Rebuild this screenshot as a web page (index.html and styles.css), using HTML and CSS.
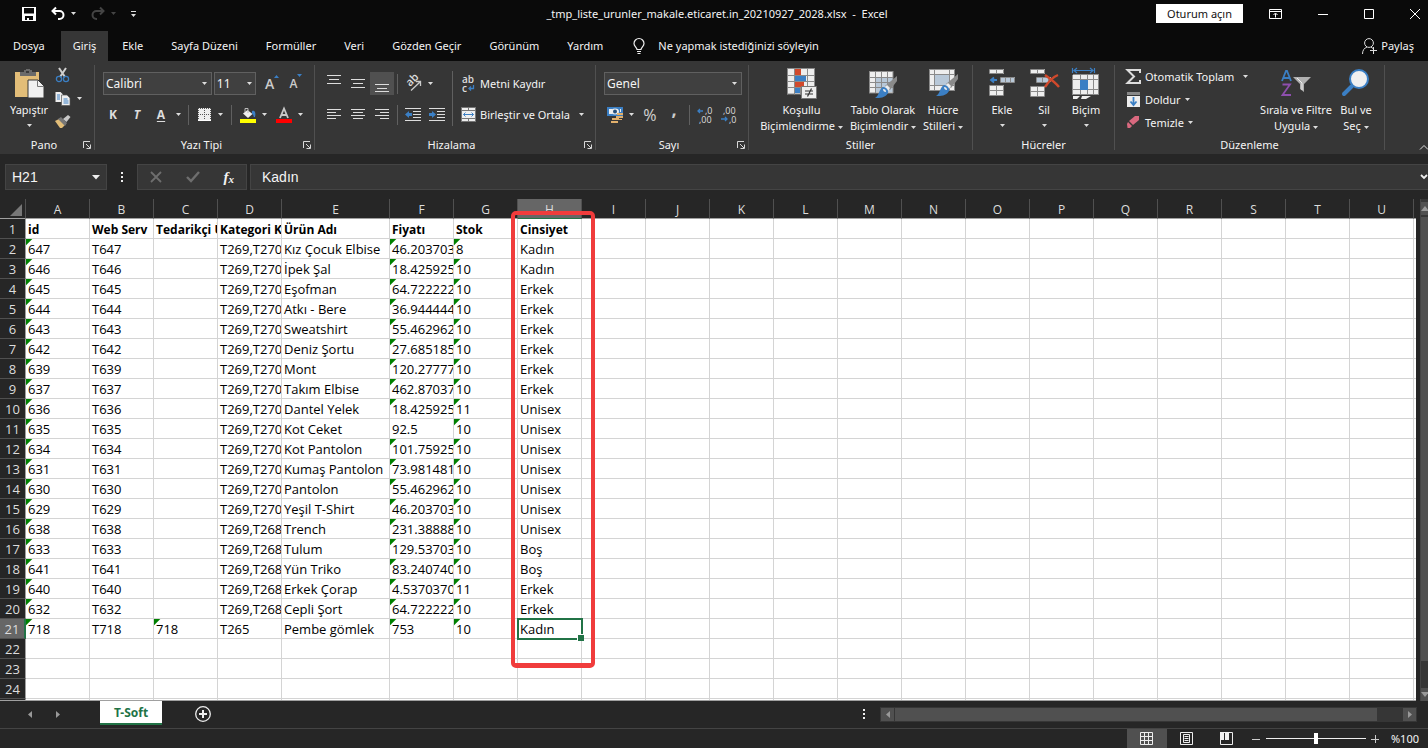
FILE: index.html
```html
<!DOCTYPE html>
<html lang="tr">
<head>
<meta charset="utf-8">
<title>_tmp_liste_urunler_makale.eticaret.in_20210927_2028.xlsx - Excel</title>
<link rel="stylesheet" href="styles.css">
</head>
<body>
<svg class="defs" aria-hidden="true">
  <symbol id="caret" viewBox="0 0 5 3"><path d="M0 0h5L2.500 3z" fill="currentColor"/></symbol>
  <symbol id="launch" viewBox="0 0 8 8"><path d="M.5 7V.5H7M3 3l4 4M7.500 3.500v4h-4" fill="none" stroke="#d8d8d8"/></symbol>
</svg>

<header class="titlebar">
  <div class="quick">
    <button class="ib" aria-label="Kaydet"><svg width="14" height="14" viewBox="0 0 14 14"><path fill="#fff" fill-rule="evenodd" d="M0 0h14v14H0zM2 1v5.500h10V1zM3 9v4h2v-2h2v2h4V9z"/></svg></button>
    <button class="ib undo" aria-label="Geri al"><svg width="14" height="13" viewBox="0 0 14 13"><path d="M1 4h7.500a4 4 0 0 1 0 8H7M5 .5L1.500 4 5 7.500" fill="none" stroke="#fff" stroke-width="2"/></svg><svg class="caret"><use href="#caret"/></svg></button>
    <button class="ib redo" aria-label="Yinele"><svg width="14" height="13" viewBox="0 0 14 13"><path d="M13 4H5.500a4 4 0 0 0 0 8H6M9 .5L12.500 4 9 7.500" fill="none" stroke="#444" stroke-width="2"/></svg><svg class="caret"><use href="#caret"/></svg></button>
    <button class="ib" aria-label="Özelleştir"><svg width="5" height="6" viewBox="0 0 5 6"><path d="M0 0h5v1H0zM0 3h5L2.500 6z" fill="#ddd"/></svg></button>
  </div>
  <h1 class="doc">_tmp_liste_urunler_makale.eticaret.in_20210927_2028.xlsx&nbsp; -&nbsp; Excel</h1>
  <div class="win">
    <button class="signin">Oturum açın</button>
    <button class="ib" aria-label="Şerit görüntüleme"><svg width="13" height="10" viewBox="0 0 13 10"><path d="M.5.5h12v9H.5zM.5 2.500h12M6.500 8.500v-4M4.500 6l2-2 2 2" fill="none" stroke="#fff"/></svg></button>
    <button class="ib" aria-label="Simge durumu"><svg width="10" height="10" viewBox="0 0 10 10"><path d="M0 5.500h10" stroke="#fff"/></svg></button>
    <button class="ib" aria-label="Ekranı kapla"><svg width="10" height="10" viewBox="0 0 10 10"><path d="M.5.5h9v9h-9z" fill="none" stroke="#fff"/></svg></button>
    <button class="ib" aria-label="Kapat"><svg width="10" height="10" viewBox="0 0 10 10"><path d="M0 0l10 10M10 0L0 10" stroke="#fff"/></svg></button>
  </div>
</header>

<nav class="tabs">
  <button class="file">Dosya</button><button class="on">Giriş</button><button>Ekle</button><button>Sayfa Düzeni</button><button>Formüller</button><button>Veri</button><button>Gözden Geçir</button><button>Görünüm</button><button>Yardım</button>
  <button class="tell"><svg width="12" height="16" viewBox="0 0 12 16"><path d="M4 11.500c0-2-3-3-3-6a5 5 0 0 1 10 0c0 3-3 4-3 6zM4 13.500h4M4.500 15.500h3" fill="none" stroke="#eee" stroke-width="1.200"/></svg>Ne yapmak istediğinizi söyleyin</button>
  <button class="share"><svg width="15" height="16" viewBox="0 0 15 16"><circle cx="7" cy="5" r="4.400" fill="none" stroke="#ddd"/><path d="M.5 16c0-4 2-6 4.500-7M9 9l2 1.500M8 12.500h7M11.500 9v7" fill="none" stroke="#ddd"/></svg>Paylaş</button>
</nav>

<section class="ribbon">
  <div class="group pano">
    <div class="body">
      <button class="big"><svg width="32" height="32" viewBox="0 0 32 32"><path d="M2 4h24v25H2z" fill="#e2bd78"/><path d="M7 4h4V2h2V1h4v1h2v2h4v4H7z" fill="#6a6a6a"/><path d="M13 3h3v2h-3z" fill="#3a3a3a"/><path d="M15 12h10l6 6v12H15z" fill="#f0f0f0" stroke="#363636"/><path d="M24.500 12v6.500H31" fill="none" stroke="#777"/></svg><span>Yapıştır</span><svg class="caret"><use href="#caret"/></svg></button>
      <div class="stack">
        <button class="ib" aria-label="Kes"><svg width="16" height="16" viewBox="0 0 16 16"><path d="M4 1l6 9M11 1L5 10" stroke="#d0d0d0" stroke-width="2"/><circle cx="4" cy="12" r="2.600" fill="none" stroke="#3b7fc4" stroke-width="1.300"/><circle cx="11" cy="12" r="2.600" fill="none" stroke="#3b7fc4" stroke-width="1.300"/></svg></button>
        <button class="ib" aria-label="Kopyala"><svg width="16" height="15" viewBox="0 0 16 15"><path d="M.5 1h5l2.500 2.500V11H.500z" fill="#eee"/><path d="M6.500 4h5.500l3 3v7.500H6.500z" fill="#eee" stroke="#555" stroke-width=".7"/><path d="M2 4h3M2 6h3M2 8h3M8.500 8h4M8.500 10h5M8.500 12h5" stroke="#3b7fc4"/></svg><svg class="caret"><use href="#caret"/></svg></button>
        <button class="ib" aria-label="Biçim boyacısı"><svg width="16" height="15" viewBox="0 0 16 15"><path d="M0 7l4-2 6 6-3 3H5z" fill="#e2bd78"/><path d="M3 5l3-2 6 6-2 3z" fill="#777"/><path d="M8 5l5-4 2.500 2-4 5z" fill="#c8c8c8"/></svg></button>
      </div>
    </div>
    <div class="label"><span>Pano</span><button class="ib" aria-label="Pano ayarları"><svg width="8" height="8"><use href="#launch"/></svg></button></div>
  </div>

  <div class="group font">
    <div class="body rows">
      <div class="row">
        <label class="combo wide"><select aria-label="Yazı tipi"><option>Calibri</option></select><svg class="caret"><use href="#caret"/></svg></label>
        <label class="combo size"><select aria-label="Boyut"><option>11</option></select><svg class="caret"><use href="#caret"/></svg></label>
        <button class="ib grow" aria-label="Büyüt"><b>A</b><svg width="5" height="3" viewBox="0 0 5 3"><path d="M0 3h5L2.500 0z" fill="#3b7fc4"/></svg></button>
        <button class="ib shrink" aria-label="Küçült"><b>A</b><svg width="5" height="3" viewBox="0 0 5 3"><path d="M0 0h5L2.500 3z" fill="#3b7fc4"/></svg></button>
      </div>
      <div class="row">
        <button class="w24 fmt">K</button><button class="w24 fmt it">T</button><button class="w24 fmt un">A</button><button class="w9 ib" aria-label="Altı çizili"><svg class="caret"><use href="#caret"/></svg></button>
        <i class="sep"></i>
        <button class="ib tool" aria-label="Kenarlık"><svg width="15" height="15" viewBox="0 0 15 15"><path d="M1 1h13v12H1z" fill="#eee"/><path d="M1 1.500h13M1 7.500h13M7.500 1v12M1.500 1v12M13.500 1v12" stroke="#555" stroke-dasharray="1 1"/><path d="M1 13.500h13" stroke="#fff"/></svg><svg class="caret"><use href="#caret"/></svg></button>
        <i class="sep"></i>
        <button class="ib tool" aria-label="Dolgu rengi"><svg width="16" height="16" viewBox="0 0 16 16"><path d="M3 6.500L7.500 3l5 4L8 11z" fill="#eee"/><path d="M5 5V1.500h3V6" fill="none" stroke="#bbb"/><path d="M12 4c3-1 4 2 3 6-2 1-1-3-3-3z" fill="#3b7fc4"/><path d="M0 12h16v4H0z" fill="#ff0"/></svg><svg class="caret"><use href="#caret"/></svg></button>
        <button class="ib tool" aria-label="Yazı tipi rengi"><svg width="16" height="16" viewBox="0 0 16 16"><path d="M4 11L8 1.500 12 11M5.500 8h5" fill="none" stroke="#c8c8c8" stroke-width="1.800"/><path d="M0 12h16v4H0z" fill="#f00"/></svg><svg class="caret"><use href="#caret"/></svg></button>
      </div>
    </div>
    <div class="label"><span>Yazı Tipi</span><button class="ib" aria-label="Yazı tipi ayarları"><svg width="8" height="8"><use href="#launch"/></svg></button></div>
  </div>

  <div class="group align">
    <div class="body">
      <div class="rows">
        <div class="row">
          <button class="w24 ib" aria-label="Üste hizala"><svg width="14" height="18" viewBox="0 0 14 18"><path d="M0 .5h14M2 4.500h10M0 8.500h14" stroke="#ddd"/></svg></button><button class="w24 ib" aria-label="Ortala"><svg width="14" height="18" viewBox="0 0 14 18"><path d="M0 4.500h14M2 8.500h10M0 12.500h14" stroke="#ddd"/></svg></button><button class="w24 ib active" aria-label="Alta hizala"><svg width="14" height="18" viewBox="0 0 14 18"><path d="M0 9.500h14M2 13.500h10M0 16.500h14" stroke="#ddd"/></svg></button>
          <i class="sep"></i>
          <button class="ib tool" aria-label="Yönlendirme"><svg width="17" height="17" viewBox="0 0 17 17"><g transform="translate(5 12) rotate(-45)"><text x="0" y="0" font-size="11" font-weight="600" fill="#ddd">ab</text></g><path d="M6 15.500L15 7M11 6.500h4.500V11" fill="none" stroke="#ccc" stroke-width="1.300"/></svg><svg class="caret"><use href="#caret"/></svg></button>
        </div>
        <div class="row">
          <button class="w24 ib" aria-label="Sola hizala"><svg width="14" height="12" viewBox="0 0 14 12"><path d="M0 .5h14M0 3.500h9M0 6.500h14M0 9.500h9" stroke="#ddd"/></svg></button><button class="w24 ib" aria-label="Ortala yatay"><svg width="14" height="12" viewBox="0 0 14 12"><path d="M0 .5h14M2 3.500h10M0 6.500h14M2 9.500h10" stroke="#ddd"/></svg></button><button class="w24 ib" aria-label="Sağa hizala"><svg width="14" height="12" viewBox="0 0 14 12"><path d="M0 .5h14M5 3.500h9M0 6.500h14M5 9.500h9" stroke="#ddd"/></svg></button>
          <i class="sep"></i>
          <button class="w24 ib" aria-label="Girintiyi azalt"><svg width="16" height="14" viewBox="0 0 16 14"><path d="M0 .5h16M8 3.500h8M8 6.500h8M8 9.500h8M0 12.500h16" stroke="#ddd"/><path d="M0 6.500L4 3v2h3v3H4v2z" fill="#3b7fc4"/></svg></button><button class="w24 ib" aria-label="Girintiyi artır"><svg width="16" height="14" viewBox="0 0 16 14"><path d="M0 .5h16M8 3.500h8M8 6.500h8M8 9.500h8M0 12.500h16" stroke="#ddd"/><path d="M7 6.500L3 3v2H0v3h3v2z" fill="#3b7fc4"/></svg></button>
        </div>
      </div>
      <i class="sep tall"></i>
      <div class="rows">
        <button class="line"><svg width="15" height="16" viewBox="0 0 15 16"><text x="1" y="7" font-size="10" font-weight="600" fill="#ddd">ab</text><text x="1" y="16" font-size="10" font-weight="600" fill="#ddd">c</text><path d="M12.500 9v3.500H8M10 10.500l-2 2 2 2" fill="none" stroke="#3b7fc4" stroke-width="1.300"/></svg>Metni Kaydır</button>
        <button class="line"><svg width="15" height="15" viewBox="0 0 15 15"><path d="M0 0h15v15H0z" fill="#777"/><path d="M1 1h6v2H1zM8 1h6v2H8zM1 4h13v7H1zM1 12h6v2H1zM8 12h6v2H8z" fill="#eee"/><path d="M2.500 7.500h10M4.500 5.500l-2 2 2 2M10.500 5.500l2 2-2 2" fill="none" stroke="#3b7fc4"/></svg>Birleştir ve Ortala<svg class="caret far"><use href="#caret"/></svg></button>
      </div>
    </div>
    <div class="label"><span>Hizalama</span><button class="ib" aria-label="Hizalama ayarları"><svg width="8" height="8"><use href="#launch"/></svg></button></div>
  </div>

  <div class="group number">
    <div class="body rows">
      <label class="combo fmtbox"><select aria-label="Sayı biçimi"><option>Genel</option></select><svg class="caret"><use href="#caret"/></svg></label>
      <div class="row">
        <button class="ib tool" aria-label="Para birimi"><svg width="16" height="17" viewBox="0 0 16 17"><path d="M0 1h16v9H0z" fill="#3b7fc4"/><path d="M2 3h3v5H2zM13 3h1v3h-1z" fill="#eee"/><ellipse cx="8" cy="5.500" rx="4" ry="3" fill="#eee"/><circle cx="8" cy="5.500" r="2" fill="#264f7a"/><path d="M10 7h6v2h-6zM9 10h7v2H9zM5 12h7v2H5zM9 13h6v1H9zM4 15h7v2H4z" fill="#e2b06c"/></svg><svg class="caret"><use href="#caret"/></svg></button>
        <button class="w24 ib pct">%</button><button class="w24 ib comma">,</button>
        <i class="sep"></i>
        <button class="w24 ib" aria-label="Ondalık artır"><svg width="16" height="16" viewBox="0 0 16 16"><text x="8" y="7" font-size="9" fill="#ddd">,0</text><text x="2" y="16" font-size="9" fill="#ddd">,00</text><path d="M6 4H1M3 2L1 4l2 2" fill="none" stroke="#3b7fc4" stroke-width="1.300"/></svg></button><button class="w24 ib" aria-label="Ondalık azalt"><svg width="16" height="16" viewBox="0 0 16 16"><text x="2" y="7" font-size="9" fill="#ddd">,00</text><text x="8" y="16" font-size="9" fill="#ddd">,0</text><path d="M0 12h6M4 10l2 2-2 2" fill="none" stroke="#3b7fc4" stroke-width="1.300"/></svg></button>
      </div>
    </div>
    <div class="label"><span>Sayı</span><button class="ib" aria-label="Sayı ayarları"><svg width="8" height="8"><use href="#launch"/></svg></button></div>
  </div>

  <div class="group styles">
    <div class="body">
      <button class="big w88"><svg width="32" height="32" viewBox="0 0 32 32"><path d="M1 1h28v25H1z" fill="#eee"/><path d="M1.500.5v26M8.500.5v26M14.500.5v26M21.500.5v26M28.500.5v26M1 .5h28M1 7.500h28M1 13.500h28M1 19.500h28M1 26h28" stroke="#8a8a8a"/><path d="M9 1h6v6H9zM9 14h9v5H9z" fill="#d0492c"/><path d="M9 8h11v5H9zM9 20h5v5H9z" fill="#3b7fc4"/><path d="M15.500 18.500h15v12h-15z" fill="#eee" stroke="#777"/><path d="M19 23h8M19 26h8M25.500 20.500l-4 8" stroke="#333" stroke-width="1.200"/></svg><span>Koşullu</span><span>Biçimlendirme <svg class="caret"><use href="#caret"/></svg></span></button>
      <button class="big w74"><svg width="32" height="32" viewBox="0 0 32 32"><path d="M2 3h24v22H2z" fill="#eee"/><path d="M8 9h18v15H8z" fill="#b8c8d8"/><path d="M2.500 3v22M8.500 3v22M14.500 3v22M20.500 3v22M26 3v22M2 3.500h24M2 9.500h24M2 14.500h24M2 19.500h24M2 25h24" stroke="#8a8a8a"/><path d="M30 8v5l-7 9-5-4z" fill="#8a8a8a"/><path d="M20 17l3 3-2 3-4-3z" fill="#eee"/><path d="M16 19c3 0 6 3 5 6-3 5-8 5-13 5 4-2 4-9 8-11z" fill="#3b7fc4"/><path d="M16 21c2 0 3 1 3 3-2 0-3-1-3-3z" fill="#eee"/></svg><span>Tablo Olarak</span><span>Biçimlendir <svg class="caret"><use href="#caret"/></svg></span></button>
      <button class="big w46"><svg width="32" height="32" viewBox="0 0 32 32"><path d="M2 1h26v22H2z" fill="#eee"/><path d="M7 6h16v12H7z" fill="#b8c8d8"/><path d="M2.500 1v22M7.500 1v22M22.500 1v22M27.500 1v22M2 1.500h26M2 6.500h26M2 17.500h26M2 22.500h26" stroke="#8a8a8a"/><path d="M31 6v5l-7 9-5-4z" fill="#8a8a8a"/><path d="M21 15l3 3-2 3-4-3z" fill="#eee"/><path d="M17 17c3 0 6 3 5 6-3 5-8 5-13 5 4-2 4-9 8-11z" fill="#3b7fc4"/><path d="M17 19c2 0 3 1 3 3-2 0-3-1-3-3z" fill="#eee"/></svg><span>Hücre</span><span>Stilleri <svg class="caret"><use href="#caret"/></svg></span></button>
    </div>
    <div class="label"><span>Stiller</span></div>
  </div>

  <div class="group cells">
    <div class="body">
      <button class="big w42"><svg width="32" height="32" viewBox="0 0 32 32"><path d="M4 1h14v5H4zM4 17h14v10H4z" fill="#eee"/><path d="M15 9h14v5H15z" fill="#b8c8d8"/><path d="M3.500 1.500h14v4h-14zM10.500 1v5M14.500 9.500h14v5h-14zM19.500 9v6M24.500 9v6M3.500 17.500h14v10h-14zM3.500 22.500h14M10.500 17v11" fill="none" stroke="#8a8a8a"/><path d="M11 12H6M8 9.500L5 12l3 2.500" fill="none" stroke="#3b7fc4" stroke-width="1.800"/></svg><span>Ekle</span><svg class="caret"><use href="#caret"/></svg></button>
      <button class="big w42"><svg width="32" height="32" viewBox="0 0 32 32"><path d="M3 1h14v5H3zM3 18h14v10H3z" fill="#eee"/><path d="M9 9h14v5H9z" fill="#b8c8d8"/><path d="M2.500 1.500h14v4h-14zM9.500 1v5M8.500 9.500h12v5h-12zM14.500 9v6M2.500 18.500h14v10h-14zM2.500 23.500h14M9.500 18v11" fill="none" stroke="#8a8a8a"/><path d="M17 7c4 3 9 6 14 12M30 7c-5 2-9 6-13 12" fill="none" stroke="#d0492c" stroke-width="2.400"/></svg><span>Sil</span><svg class="caret"><use href="#caret"/></svg></button>
      <button class="big w42"><svg width="32" height="32" viewBox="0 0 32 32"><path d="M2.500 0v5M24.500 0v5M4 2.500h19M7 0L4 2.500 7 5M20 0l3 2.500L20 5" fill="none" stroke="#3b7fc4" stroke-width="1.200"/><path d="M3 7h26v20H3z" fill="#eee"/><path d="M3 6.500h26M3 11.500h26M3 21.500h26M3 26.500h26M2.500 7v20M10.500 7v20M17.500 7v20M23.500 7v20M28.500 7v20" stroke="#8a8a8a"/><path d="M10 12h8v10h-8z" fill="#3b7fc4"/><path d="M3 28h7l-3 3H3zM12 28h9l-5 3h-5z" fill="#eee"/></svg><span>Biçim</span><svg class="caret"><use href="#caret"/></svg></button>
    </div>
    <div class="label"><span>Hücreler</span></div>
  </div>

  <div class="group edit">
    <div class="body">
      <div class="stack">
        <button class="line"><svg width="15" height="15" viewBox="0 0 15 15"><path d="M14 4V1H1.500L8 7.500 1.500 14H14v-3" fill="none" stroke="#ddd" stroke-width="2"/></svg>Otomatik Toplam<svg class="caret far"><use href="#caret"/></svg></button>
        <button class="line"><svg width="15" height="15" viewBox="0 0 15 15"><path d="M1 0h13v3H1z" fill="#888"/><path d="M1 4h13v11H1z" fill="#eee"/><path d="M7.500 5v8M4.500 9.500l3 3.500 3-3.500" fill="none" stroke="#3b7fc4" stroke-width="1.800"/></svg>Doldur <svg class="caret"><use href="#caret"/></svg></button>
        <button class="line"><svg width="15" height="15" viewBox="0 0 15 15"><path d="M9 1h4v4l-6 5-4-4z" fill="#d9697f"/><path d="M2 7l4 4-2 2H1.500L1 9z" fill="#d9697f"/></svg>Temizle <svg class="caret"><use href="#caret"/></svg></button>
      </div>
      <button class="big w74"><svg width="32" height="32" viewBox="0 0 32 32"><path d="M2 13L6 3h1l4 10M3.500 10h6" fill="none" stroke="#3b7fc4" stroke-width="1.800"/><path d="M2.500 16.500H10L2.500 27H11" fill="none" stroke="#8e4fae" stroke-width="1.800"/><path d="M13 9h18l-7 7v8l-4-3v-5z" fill="#b0b0b0"/><path d="M17 10l5 5v7" fill="none" stroke="#eee"/></svg><span>Sırala ve Filtre</span><span>Uygula <svg class="caret"><use href="#caret"/></svg></span></button>
      <button class="big w46"><svg width="32" height="32" viewBox="0 0 32 32"><path d="M12 18l-8 8" stroke="#3b7fc4" stroke-width="4" stroke-linecap="round"/><circle cx="19" cy="11" r="9" fill="#f0f0f0" stroke="#3b7fc4" stroke-width="2"/></svg><span>Bul ve</span><span>Seç <svg class="caret"><use href="#caret"/></svg></span></button>
    </div>
    <div class="label"><span>Düzenleme</span></div>
  </div>
  <button class="ib collapse" aria-label="Şeridi daralt"><svg width="8" height="5" viewBox="0 0 8 5"><path d="M0 4.500l4-4 4 4" fill="none" stroke="#ddd"/></svg></button>
</section>

<section class="formula">
  <div class="namebox"><input aria-label="Ad kutusu" value="H21"><svg width="8" height="5" viewBox="0 0 8 5"><path d="M0 0h8L4 4.500z" fill="#eee"/></svg></div>
  <svg width="2" height="11" viewBox="0 0 2 11"><path d="M0 0h2v2H0zM0 4h2v2H0zM0 8h2v2H0z" fill="#eee"/></svg>
  <div class="fx">
    <button class="ib" aria-label="İptal"><svg width="12" height="12" viewBox="0 0 12 12"><path d="M1 1l10 10M11 1L1 11" stroke="#6e6e6e" stroke-width="1.800"/></svg></button>
    <button class="ib" aria-label="Gir"><svg width="14" height="12" viewBox="0 0 14 12"><path d="M1 6l4 4 8-9" fill="none" stroke="#6e6e6e" stroke-width="2.400"/></svg></button>
    <button class="ib fn" aria-label="İşlev ekle"><i>f</i><small>x</small></button>
  </div>
  <div class="entry"><input aria-label="Formül çubuğu" value="Kadın"><svg width="8" height="6" viewBox="0 0 8 6"><path d="M1 1l3 3 3-3" fill="none" stroke="#eee" stroke-width="1.800"/></svg></div>
</section>

<main class="sheet">
  <div class="gridwrap">
    <table class="grid"><colgroup id="cols"></colgroup><thead id="head"></thead><tbody id="rows"></tbody></table>
    <div class="mark"></div>
  </div>
  <div class="vscroll">
    <button class="ib" aria-label="Yukarı"><svg width="8" height="5" viewBox="0 0 8 5"><path d="M0 5h8L4 0z" fill="#999"/></svg></button>
    <div class="vthumb"></div>
    <button class="ib" aria-label="Aşağı"><svg width="8" height="5" viewBox="0 0 8 5"><path d="M0 0h8L4 5z" fill="#999"/></svg></button>
  </div>
</main>

<section class="sheetbar">
  <button class="ib nav" aria-label="Önceki"><svg width="4" height="7" viewBox="0 0 4 7"><path d="M4 0v7L0 3.500z" fill="#999"/></svg></button>
  <button class="ib nav" aria-label="Sonraki"><svg width="4" height="7" viewBox="0 0 4 7"><path d="M0 0v7l4-3.500z" fill="#999"/></svg></button>
  <button class="sheettab">T-Soft</button>
  <button class="ib" aria-label="Yeni sayfa"><svg width="16" height="16" viewBox="0 0 16 16"><circle cx="8" cy="8" r="7.300" fill="none" stroke="#eee" stroke-width="1.300"/><path d="M8 4v8M4 8h8" stroke="#eee" stroke-width="2"/></svg></button>
  <svg class="dots" width="2" height="11" viewBox="0 0 2 11"><path d="M0 0h2v2H0zM0 4h2v2H0zM0 8h2v2H0z" fill="#eee"/></svg>
  <div class="hscroll">
    <button class="ib" aria-label="Sola"><svg width="4" height="7" viewBox="0 0 4 7"><path d="M4 0v7L0 3.500z" fill="#999"/></svg></button>
    <div class="track"><div class="hthumb"></div></div>
    <button class="ib" aria-label="Sağa"><svg width="4" height="7" viewBox="0 0 4 7"><path d="M0 0v7l4-3.500z" fill="#999"/></svg></button>
  </div>
</section>

<footer class="status">
  <button class="ib view on" aria-label="Normal"><svg width="13" height="13" viewBox="0 0 13 13"><path d="M.5.5h12v12H.5zM.5 4.500h12M.5 8.500h12M4.500.5v12M8.500.5v12" fill="none" stroke="#eee"/></svg></button>
  <button class="ib view" aria-label="Sayfa düzeni"><svg width="13" height="13" viewBox="0 0 13 13"><path d="M.5.5h12v12H.5zM3.500 2.500h6v8h-6zM4.500 4.500h4M4.500 6.500h4M4.500 8.500h4" fill="none" stroke="#eee"/></svg></button>
  <button class="ib view" aria-label="Sayfa sonu"><svg width="13" height="13" viewBox="0 0 13 13"><path d="M.5.5h12v12H.5z" fill="none" stroke="#eee"/><path d="M0 0h4v8H0zM5 0h4v8H5z" fill="#eee"/></svg></button>
  <button class="ib" aria-label="Uzaklaştır"><svg width="8" height="8" viewBox="0 0 8 8"><path d="M0 4.500h8" stroke="#ccc"/></svg></button>
  <input class="zoom" type="range" min="0" max="100" value="50" aria-label="Yakınlaştırma">
  <button class="ib" aria-label="Yakınlaştır"><svg width="8" height="8" viewBox="0 0 8 8"><path d="M0 4.500h8M4.500 0v8" stroke="#ccc"/></svg></button>
  <span class="pc">%100</span>
</footer>
<script src="script.js"></script>
</body>
</html>
```

FILE: styles.css
```css
* { box-sizing: border-box; }
body { margin: 0; height: 100vh; display: flex; flex-direction: column; overflow: hidden; background: #262626; color: #f4f4f4; font: 11px/16px "Noto Sans", "Open Sans", sans-serif; }
button, input, select { font: inherit; color: inherit; background: none; border: 0; padding: 0; margin: 0; }
button { white-space: nowrap; }
svg { flex: none; display: block; overflow: visible; }
svg text { font-family: "Open Sans", sans-serif; }
.defs { display: none; }
.ib { display: flex; align-items: center; justify-content: center; }
.caret { width: 5px; height: 3px; color: #ddd; }

.titlebar { flex: none; height: 31px; background: #0a0a0a; display: grid; grid-template-columns: 1fr auto 1fr; align-items: center; padding-bottom: 4px; }
.quick { display: flex; align-items: center; padding-left: 22px; gap: 15px; }
.quick .ib { gap: 6px; }
.redo .caret { color: #444; }
.doc { margin: 0; padding-left: 6px; font-size: 11px; font-weight: 400; }
.win { display: flex; align-items: center; justify-content: flex-end; gap: 36px; padding-right: 8px; }
.signin { background: #fff; color: #111; height: 19px; padding: 0 11px; margin-right: -10px; }

.tabs { flex: none; height: 30px; background: #0a0a0a; display: flex; align-items: stretch; }
.tabs button { padding: 0 14px; }
.tabs .file { padding: 0 16px 0 13px; }
.tabs .on { background: #363636; padding: 0 12px; }
.tabs .tell, .tabs .share { display: flex; align-items: center; gap: 13px; padding: 0 16px; }
.tabs .share { margin-left: auto; gap: 4px; padding-right: 14px; }

.ribbon { flex: none; background: #363636; height: 93px; padding-top: 4px; display: flex; align-items: flex-start; }
.group { border-right: 1px solid #505050; display: flex; flex-direction: column; height: 85px; padding-left: 8px; }
.body { flex: none; height: 72px; display: flex; }
.label { display: flex; align-items: center; height: 16px; }
.label span { flex: 1; text-align: center; line-height: 16px; }
.label .ib { width: 14px; }
.pano { width: 95px; }
.font { width: 220px; }
.align { width: 281px; padding-left: 7px; }
.number { width: 153px; }
.styles { width: 224px; }
.cells { width: 142px; }
.edit { width: 270px; }
.styles .label, .cells .label, .edit .label { margin-left: -8px; }
.big { display: flex; flex-direction: column; align-items: center; padding-top: 3px; }
.big > svg:first-child { margin-bottom: 2px; }
.big span { line-height: 16px; }
.big span .caret { display: inline-block; vertical-align: middle; }
.big > .caret { margin-top: 6px; }
.pano .big { width: 42px; margin-right: 5px; }
.stack { display: flex; flex-direction: column; justify-content: space-between; align-items: flex-start; padding: 2px 0 8px; }
.pano .stack .ib { gap: 6px; height: 16px; }
.w88 { width: 89px; }
.w74 { width: 74px; }
.w46 { width: 46px; }
.w42 { width: 42px; }

.rows { display: flex; flex-direction: column; gap: 8px; padding-top: 7px; }
.row { display: flex; align-items: center; height: 23px; }
.w24 { width: 24px; height: 23px; }
.w9 { width: 10px; }
.sep { width: 1px; height: 20px; background: #606060; }
.combo { display: grid; align-items: center; height: 23px; }
.combo select { grid-area: 1 / 1; appearance: none; width: 100%; height: 23px; border: 1px solid #606060; background: #404040; padding-left: 2px; font-size: 12px; }
.combo .caret { grid-area: 1 / 1; justify-self: end; margin-right: 5px; pointer-events: none; }
.wide { width: 111px; margin-right: 2px; }
.size { width: 43px; margin-right: 9px; }
.size .caret { margin-right: 4px; }
.fmtbox { width: 138px; }
.grow, .shrink { width: 25px; align-items: flex-start; justify-content: flex-start; color: #ccc; }
.grow b { font: 600 14px/18px "Open Sans", sans-serif; }
.shrink b { font: 600 12px/20px "Open Sans", sans-serif; }
.fmt { font: 700 12px/23px "Open Sans", sans-serif; color: #ddd; }
.font .row:nth-child(2) { margin-left: -2px; }
.it { font-style: italic; }
.un { text-decoration: underline; text-underline-offset: 2px; }
.font .row .w9 { margin-right: 5px; }
.tool { gap: 6px; padding: 0 5px 0 7px; }
.font .tool { padding: 0 4px 0 1px; }
.font .sep + .tool { padding-left: 8px; padding-right: 8px; }
.active { background: #505050; }
.align .sep { margin-left: 3px; }
.align .sep + .w24 { margin-left: 3px; }
.align .sep.tall { height: 55px; margin: 6px 8px 0 3px; }
.line { display: flex; align-items: center; gap: 4px; height: 23px; }
.far { margin-left: 5px; }
.number .tool { padding: 0 4px 0 3px; }
.pct { font-size: 16px; color: #ccc; }
.comma { font: 700 18px/10px "Open Sans", sans-serif; color: #ccc; padding-bottom: 12px; }
.number .sep { margin: 0 3px; }
.edit .stack { padding: 0 0 3px 3px; width: 136px; }
.edit .line { gap: 4px; }
.collapse { align-self: flex-end; margin: 0 0 4px auto; }

.formula { flex: none; display: flex; align-items: center; padding: 10px 0 9px 5px; gap: 14px; font: 14px/18px "Liberation Sans", Arial, sans-serif; }
.namebox, .fx, .entry { height: 26px; border: 1px solid #444; background: #363636; display: flex; align-items: center; }
.namebox { width: 102px; padding: 0 6px; }
.namebox input { flex: 1; min-width: 0; }
.fx { width: 110px; justify-content: space-around; margin-right: -11px; }
.fn { font: italic 700 15px/18px "Liberation Serif", serif; }
.fn small { font-size: 11px; padding-top: 4px; }
.entry { flex: 1; padding-left: 11px; border-right: 0; }
.entry input { flex: 1; }

.sheet { flex: 1; min-height: 0; display: flex; }
.gridwrap { position: relative; flex: 1; overflow: hidden; border-bottom: 1px solid #a0a0a0; margin-right: 4px; }
.grid { table-layout: fixed; border-collapse: separate; border-spacing: 0; width: 1478px; font: 13px/18px "Open Sans", sans-serif; color: #000; }
.grid th { height: 20px; padding: 0; background: #262626; color: #ddd; font-weight: 400; font-size: 12px; line-height: 18px; }
.grid thead th { border-right: 1px solid #505050; border-bottom: 1px solid #a0a0a0; line-height: 16px; padding-top: 3px; }
.grid tbody th { border-right: 1px solid #a0a0a0; border-bottom: 1px solid #505050; font-size: 13px; }
.grid td { height: 20px; padding: 0 0 0 2px; background: #fff; border-right: 1px solid #d4d4d4; border-bottom: 1px solid #d4d4d4; white-space: nowrap; overflow: hidden; }
.grid thead th.sel { background: #666; border-bottom-color: #217346; }
.grid tbody th.sel { background: #666; border-right: 2px solid #217346; }
.grid td.err { background: linear-gradient(135deg, #008000 4px, transparent 5px) #fff; }
.grid .b td { font-weight: 700; font-size: 12px; line-height: 17px; padding-top: 2px; }
.grid thead th.corner { padding-top: 0; }
.corner svg { margin: 3px 0 0 10px; }
.grid td.cur { outline: 2px solid #217346; outline-offset: -1px; position: relative; overflow: visible; }
.cur::after { content: ""; position: absolute; right: -3px; bottom: -3px; width: 6px; height: 6px; background: #217346; border: solid #fff; border-width: 1px 0 0 1px; }
.mark { position: absolute; left: 511px; top: 12px; width: 84px; height: 457px; border: 4px solid #f03c3c; border-bottom-width: 5px; border-radius: 5px; }
.vscroll { width: 8px; padding-top: 3px; display: flex; flex-direction: column; overflow: hidden; background: #363636; border-left: 1px solid #444; }
.vscroll .ib { height: 13px; background: #505050; }
.vthumb { flex: none; height: 89%; margin-top: 2px; background: #505050; }
.vscroll .ib:last-child { margin-top: auto; }

.sheetbar { flex: none; height: 27px; display: flex; align-items: flex-start; }
.sheetbar .ib { height: 26px; }
.nav { width: 28px; }
.nav:first-child { margin-left: 16px; }
.sheettab { background: #fff; color: #217346; font: 700 12px/20px "Noto Sans", sans-serif; border-bottom: 2px solid #217346; height: 24px; width: 62px; padding-top: 2px; margin: 0 33px 0 28px; }
.dots { margin: 8px 15px 0 auto; }
.hscroll { width: 38%; max-width: 537px; margin: 6px 11px 0 0; display: flex; gap: 1px; border: 1px solid #363636; background: #363636; }
.hscroll .ib { width: 13px; height: 13px; background: #505050; }
.track { flex: 1; }
.hthumb { width: 95%; height: 13px; background: #505050; }

.status { flex: none; height: 20px; border-top: 1px solid #444; display: flex; align-items: stretch; justify-content: flex-end; }
.view { width: 40px; }
.view.on { background: #505050; }
.status .ib:not(.view) { width: 19px; }
.zoom { appearance: none; width: 100px; height: 19px; }
.zoom::-webkit-slider-runnable-track { height: 1px; background: #eee; }
.zoom::-webkit-slider-thumb { appearance: none; width: 4px; height: 11px; margin-top: -5px; background: #fff; }
.pc { line-height: 19px; padding: 0 9px 0 6px; }
```

FILE: script.js
```js
const letters = "ABCDEFGHIJKLMNOPQRSTUV".split("");
const data = [
  ["id", "Web Serv", "Tedarikçi Ü", "Kategori K", "Ürün Adı", "Fiyatı", "Stok", "Cinsiyet"],
  ["647", "T647", "", "T269,T270,", "Kız Çocuk Elbise", "46.203703", "8", "Kadın"],
  ["646", "T646", "", "T269,T270,", "İpek Şal", "18.425925", "10", "Kadın"],
  ["645", "T645", "", "T269,T270,", "Eşofman", "64.722222", "10", "Erkek"],
  ["644", "T644", "", "T269,T270,", "Atkı - Bere", "36.944444", "10", "Erkek"],
  ["643", "T643", "", "T269,T270,", "Sweatshirt", "55.462962", "10", "Erkek"],
  ["642", "T642", "", "T269,T270,", "Deniz Şortu", "27.685185", "10", "Erkek"],
  ["639", "T639", "", "T269,T270,", "Mont", "120.27777", "10", "Erkek"],
  ["637", "T637", "", "T269,T270,", "Takım Elbise", "462.87037", "10", "Erkek"],
  ["636", "T636", "", "T269,T270,", "Dantel Yelek", "18.425925", "11", "Unisex"],
  ["635", "T635", "", "T269,T270,", "Kot Ceket", "92.5", "10", "Unisex"],
  ["634", "T634", "", "T269,T270,", "Kot Pantolon", "101.75925", "10", "Unisex"],
  ["631", "T631", "", "T269,T270,", "Kumaş Pantolon", "73.981481", "10", "Unisex"],
  ["630", "T630", "", "T269,T270,", "Pantolon", "55.462962", "10", "Unisex"],
  ["629", "T629", "", "T269,T270,", "Yeşil T-Shirt", "46.203703", "10", "Unisex"],
  ["638", "T638", "", "T269,T268,", "Trench", "231.38888", "10", "Unisex"],
  ["633", "T633", "", "T269,T268,", "Tulum", "129.53703", "10", "Boş"],
  ["641", "T641", "", "T269,T268,", "Yün Triko", "83.240740", "10", "Boş"],
  ["640", "T640", "", "T269,T268,", "Erkek Çorap", "4.5370370", "11", "Erkek"],
  ["632", "T632", "", "T269,T268,", "Cepli Şort", "64.722222", "10", "Erkek"],
  ["718", "T718", "718", "T265", "Pembe gömlek", "753", "10", "Kadın"]
];
document.getElementById("cols").innerHTML = '<col style="width:26px">' +
  letters.map(l => `<col style="width:${l === "E" ? 108 : 64}px">`).join("");
document.getElementById("head").innerHTML = '<tr><th class="corner"><svg width="12" height="12" viewBox="0 0 12 12"><path d="M12 0v12H0z" fill="#777"/></svg></th>' +
  letters.map(l => `<th${l === "H" ? ' class="sel"' : ""}>${l === "V" ? "" : l}</th>`).join("") + "</tr>";
let html = "";
for (let r = 1; r <= 25; r++) {
  const row = data[r - 1] || [];
  html += `<tr${r === 1 ? ' class="b"' : ""}><th${r === 21 ? ' class="sel"' : ""}>${r === 25 ? "" : r}</th>`;
  letters.forEach((l, c) => {
    const text = row[c] || "";
    const err = r > 1 && text && "ACFG".includes(l) && text !== "92.5";
    const cur = r === 21 && l === "H";
    html += `<td${err ? ' class="err"' : cur ? ' class="cur"' : ""}>${text}</td>`;
  });
  html += "</tr>";
}
document.getElementById("rows").innerHTML = html;
```
